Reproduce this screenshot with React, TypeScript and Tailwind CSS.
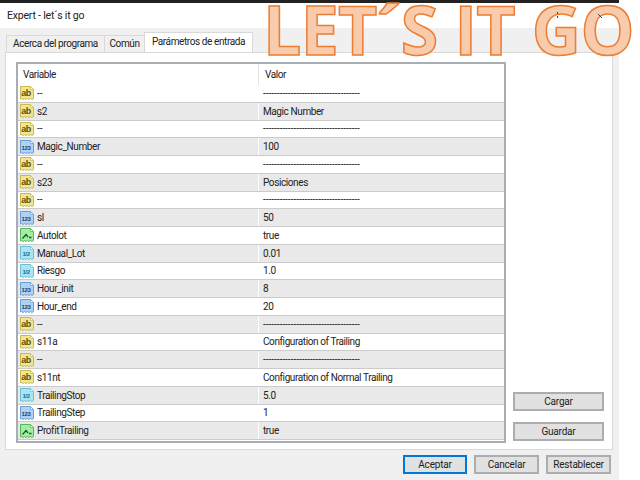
import React from "react";

type Kind = "ab" | "int" | "dbl" | "bool";

const rows: { kind: Kind; name: string; value: string }[] = [
  { kind: "ab", name: "--", value: "-----------------------------------" },
  { kind: "ab", name: "s2", value: "Magic Number" },
  { kind: "ab", name: "--", value: "-----------------------------------" },
  { kind: "int", name: "Magic_Number", value: "100" },
  { kind: "ab", name: "--", value: "-----------------------------------" },
  { kind: "ab", name: "s23", value: "Posiciones" },
  { kind: "ab", name: "--", value: "-----------------------------------" },
  { kind: "int", name: "sl", value: "50" },
  { kind: "bool", name: "Autolot", value: "true" },
  { kind: "dbl", name: "Manual_Lot", value: "0.01" },
  { kind: "dbl", name: "Riesgo", value: "1.0" },
  { kind: "int", name: "Hour_init", value: "8" },
  { kind: "int", name: "Hour_end", value: "20" },
  { kind: "ab", name: "--", value: "-----------------------------------" },
  { kind: "ab", name: "s11a", value: "Configuration of Trailing" },
  { kind: "ab", name: "--", value: "-----------------------------------" },
  { kind: "ab", name: "s11nt", value: "Configuration of Normal Trailing" },
  { kind: "dbl", name: "TrailingStop", value: "5.0" },
  { kind: "int", name: "TrailingStep", value: "1" },
  { kind: "bool", name: "ProfitTrailing", value: "true" },
];

const tagColors: Record<Kind, { fill: string; edge: string; label: string; ink: string; size: number }> = {
  ab: { fill: "#f0e694", edge: "#c9b94f", label: "ab", ink: "#5c5210", size: 9 },
  int: { fill: "#add2f4", edge: "#6a9fd6", label: "123", ink: "#1d3f6e", size: 6 },
  dbl: { fill: "#a9e6f2", edge: "#6cc0d6", label: "1/2", ink: "#1f6a80", size: 6 },
  bool: { fill: "#a5eca5", edge: "#55b855", label: "", ink: "#14601e", size: 6 },
};

function TypeIcon({ kind }: { kind: Kind }) {
  const c = tagColors[kind];
  return (
    <svg width="16" height="16" viewBox="0 0 16 16" className="shrink-0">
      <path d="M1.5 1.5h10l3 3v9l-1.5 1-1.5-1-1.5 1-1.5-1-1.5 1-1.5-1-1.5 1-1.5-1-1 .5z" fill={c.fill} stroke={c.edge} strokeLinejoin="round" />
      <path d="M11.5 1.5v3h3z" fill="#ffffff" stroke={c.edge} strokeWidth="0.7" />
      {kind === "bool" ? (
        <path d="M3.5 11.5l3.5-4 2 2.5M10 10.5h2.5" fill="none" stroke={c.ink} strokeWidth="1.3" />
      ) : (
        <text x="7" y="11" textAnchor="middle" fontSize={c.size} fontWeight="700" fontFamily="'Liberation Sans', sans-serif" fill={c.ink}>
          {c.label}
        </text>
      )}
    </svg>
  );
}

function DlgButton({ label, className }: { label: string; className: string }) {
  return (
    <button className={"h-[19px] border-2 bg-[#e1e1e1] text-[10px] leading-none tracking-[-0.2px] text-[#222] " + className}>
      {label}
    </button>
  );
}

export default function App() {
  return (
    <div className="relative flex h-[480px] w-[640px] overflow-hidden bg-white font-['Roboto',sans-serif] text-[#222]">
      <div className="flex w-[619px] flex-col bg-[#f0f0f0]">
        <div className="h-[3px] bg-[#222]" />
        <div className="flex h-[25px] items-center bg-white pl-[7px] text-[10.5px] tracking-[-0.2px]">Expert - let´s it go</div>

        {/* tabs */}
        <div className="flex h-[24px] items-end pl-[3px] text-[10px] tracking-[-0.4px] whitespace-nowrap">
          <div className="ml-[3px] flex h-[17px] w-[98px] items-center justify-center border-t border-l border-[#d9d9d9] bg-[#f0f0f0] leading-none">
            Acerca del programa
          </div>
          <div className="flex h-[17px] w-[40px] items-center justify-center border-t border-l border-[#d9d9d9] bg-[#f0f0f0] leading-none">
            Común
          </div>
          <div className="flex h-[20px] w-[109px] items-center justify-center border-x border-t border-[#d9d9d9] bg-white pb-[2px] leading-none">
            Parámetros de entrada
          </div>
        </div>

        {/* panel */}
        <div className="ml-[5px] flex h-[398px] w-[608px] border border-[#d9d9d9] bg-white pt-[9px] pl-[10px]">
          <div className="h-[381px] w-[490px] border-2 border-[#a9adb4] bg-white text-[10px] tracking-[-0.4px]">
            <div className="flex h-[21px]">
              <div className="flex w-[241px] items-center border-r border-[#e3e3e3] pl-[5px]">Variable</div>
              <div className="flex items-center pl-[6px]">Valor</div>
            </div>
            {rows.map((r, i) => (
              <div
                key={i}
                className={"flex h-[17.75px] border-b border-[#cbcbcb] " + (i % 2 === 1 ? "bg-[#e9e9e9]" : "bg-white")}
              >
                <div className="flex w-[241px] items-center gap-[2px] border-r border-white pl-[1px]">
                  <TypeIcon kind={r.kind} />
                  <span className={r.name === "--" ? "tracking-normal" : ""}>{r.name}</span>
                </div>
                <div className="flex items-center pl-[4px]">
                  <span className={r.value.startsWith("--") ? "tracking-normal" : ""}>{r.value}</span>
                </div>
              </div>
            ))}
          </div>
          <div className="ml-[7px] flex w-[91px] flex-col gap-[11px] pt-[330px]">
            <DlgButton label="Cargar" className="w-[91px] border-[#adadad]" />
            <DlgButton label="Guardar" className="w-[91px] border-[#adadad]" />
          </div>
        </div>

        {/* footer */}
        <div className="flex justify-end gap-[7px] pt-[5px] pr-[8px]">
          <DlgButton label="Aceptar" className="w-[64px] border-[#0078d7]" />
          <DlgButton label="Cancelar" className="w-[65px] border-[#adadad]" />
          <DlgButton label="Restablecer" className="w-[65px] border-[#adadad]" />
        </div>
      </div>

      {/* banner pasted over the title bar */}
      <div className="absolute top-[5px] left-[263px] whitespace-nowrap font-['Open_Sans',sans-serif] text-[68px] leading-[48px] font-bold tracking-[-0.7px] text-[#f8cbad] [-webkit-text-stroke:1.5px_#ed7d31]">
        LET´S IT GO
      </div>

      {/* bits of the caption buttons showing through the banner */}
      <svg width="50" height="10" viewBox="0 0 50 10" className="absolute top-[11px] left-[556px]">
        <path d="M1.5 1v2M1.5 5v2" stroke="#444" strokeWidth="1" />
        <path d="M42 3l4 4" stroke="#444" strokeWidth="1" />
      </svg>
    </div>
  );
}
